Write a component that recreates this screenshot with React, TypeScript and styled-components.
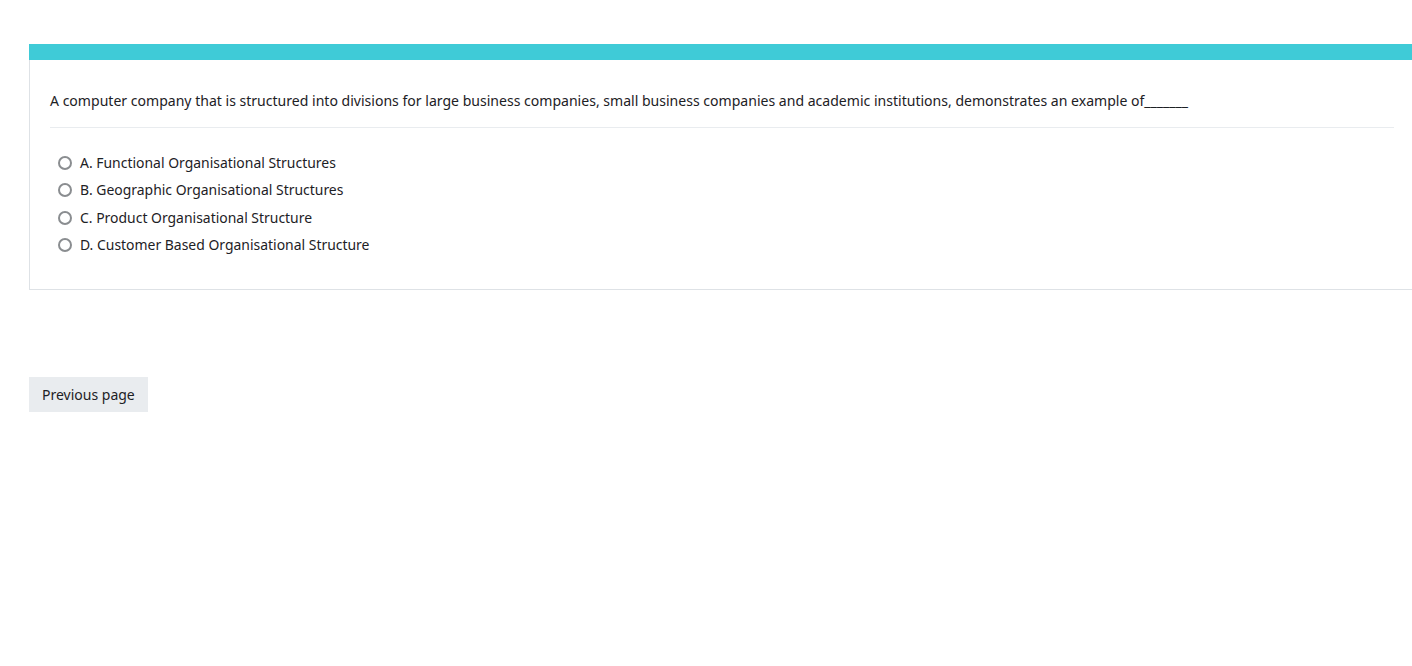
import styled, { createGlobalStyle } from 'styled-components';

const GlobalStyle = createGlobalStyle`
  html, body {
    margin: 0;
    padding: 0;
    background: #ffffff;
    overflow: hidden;
  }
  body {
    font-family: 'Noto Sans', 'Open Sans', sans-serif;
    color: #1d2125;
  }
`;

const Page = styled.div`
  padding: 44px 0 0 29px;
  width: 1420px;
  box-sizing: border-box;
`;

const QuestionCard = styled.section`
  width: 1386px;
  border: 1px solid #dee2e6;
  border-top: none;
  box-sizing: border-box;
`;

const AccentBar = styled.div`
  height: 16px;
  background-color: #3fcbd7;
  margin: 0 -1px;
`;

const CardBody = styled.div`
  padding: 30px 20px 33px 20px;
`;

const QuestionText = styled.p`
  margin: 0;
  font-size: 14.05px;
  line-height: 22px;
  padding-bottom: 15px;
  border-bottom: 1px solid #e9ecef;
`;

const Options = styled.div`
  display: flex;
  flex-direction: column;
  gap: 5.35px;
  padding: 24px 0 0 8px;
`;

const OptionRow = styled.label`
  display: flex;
  align-items: center;
  gap: 8px;
  font-size: 13.95px;
  line-height: 22px;
  cursor: pointer;
`;

const Radio = styled.span`
  width: 14px;
  height: 14px;
  border: 2px solid #8a8d90;
  border-radius: 50%;
  box-sizing: border-box;
  flex-shrink: 0;
`;

const Footer = styled.div`
  padding-top: 87px;
`;

const PrevButton = styled.button`
  background: #e9ecef;
  border: none;
  color: #1d2125;
  font-family: 'Noto Sans', 'Open Sans', sans-serif;
  font-size: 14px;
  line-height: 22px;
  height: 35px;
  padding: 0 13px;
  cursor: pointer;
`;

const options = [
  'A. Functional Organisational Structures',
  'B. Geographic Organisational Structures',
  'C. Product Organisational Structure',
  'D. Customer Based Organisational Structure',
];

const App = () => {
  return (
    <>
      <GlobalStyle />
      <Page>
        <QuestionCard>
          <AccentBar />
          <CardBody>
            <QuestionText>
              A computer company that is structured into divisions for large business companies, small business
              companies and academic institutions, demonstrates an example of_______
            </QuestionText>
            <Options>
              {options.map((opt) => (
                <OptionRow key={opt}>
                  <Radio />
                  {opt}
                </OptionRow>
              ))}
            </Options>
          </CardBody>
        </QuestionCard>
        <Footer>
          <PrevButton>Previous page</PrevButton>
        </Footer>
      </Page>
    </>
  );
};

export default App;
